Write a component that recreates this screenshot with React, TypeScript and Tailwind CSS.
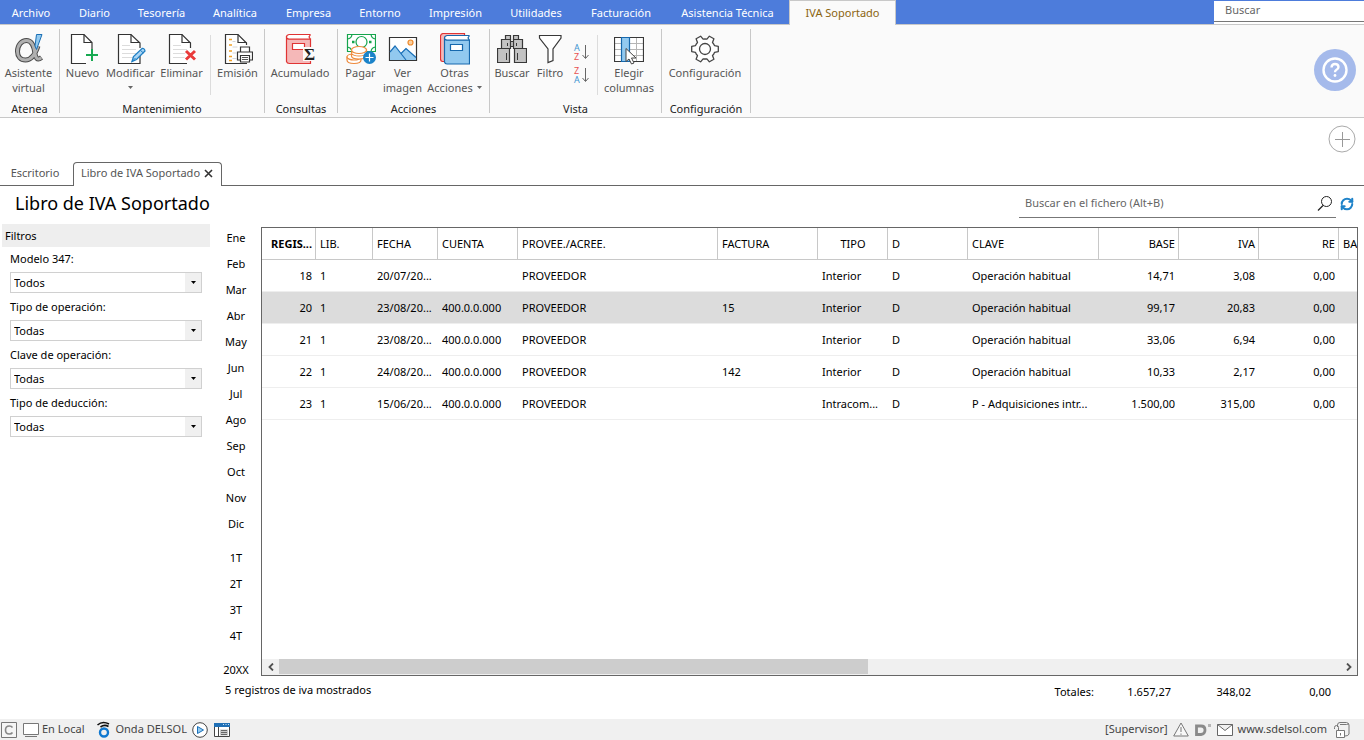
import { useState } from "react";
import type { ReactNode } from "react";
import { RefreshCw } from "lucide-react";

interface Column {
  label: string;
  width: string;
  align?: "right" | "center";
  bold?: boolean;
}

interface Filter {
  id: string;
  label: string;
  value: string;
}

const MENU = [
  { label: "Archivo", width: "w-16 pr-0.5" },
  { label: "Diario", width: "w-[61px]" },
  { label: "Tesorería", width: "w-[73px]" },
  { label: "Analítica", width: "w-[74px]" },
  { label: "Empresa", width: "w-[73px]" },
  { label: "Entorno", width: "w-[70px]" },
  { label: "Impresión", width: "w-[81px]" },
  { label: "Utilidades", width: "w-[80px]" },
  { label: "Facturación", width: "w-[90px]" },
  { label: "Asistencia Técnica", width: "w-[123px]" },
];

const MONTHS = ["Ene", "Feb", "Mar", "Abr", "May", "Jun", "Jul", "Ago", "Sep", "Oct", "Nov", "Dic"];
const QUARTERS = ["1T", "2T", "3T", "4T"];

const FILTERS: Filter[] = [
  { id: "modelo", label: "Modelo 347:", value: "Todos" },
  { id: "tipo", label: "Tipo de operación:", value: "Todas" },
  { id: "clave", label: "Clave de operación:", value: "Todas" },
  { id: "deduccion", label: "Tipo de deducción:", value: "Todas" },
];

const COLUMNS: Column[] = [
  { label: "REGIS...", width: "w-[54px]", align: "right", bold: true },
  { label: "LIB.", width: "w-[57px]" },
  { label: "FECHA", width: "w-[65px]" },
  { label: "CUENTA", width: "w-[80px]" },
  { label: "PROVEE./ACREE.", width: "w-[200px]" },
  { label: "FACTURA", width: "w-[100px]" },
  { label: "TIPO", width: "w-[70px]", align: "center" },
  { label: "D", width: "w-[80px]" },
  { label: "CLAVE", width: "w-[131px]" },
  { label: "BASE", width: "w-[80px]", align: "right" },
  { label: "IVA", width: "w-[80px]", align: "right" },
  { label: "RE", width: "w-[80px]", align: "right" },
  { label: "BA", width: "w-[80px]" },
];

const ROWS = [
  ["18", "1", "20/07/20...", "", "PROVEEDOR", "", "Interior", "D", "Operación habitual", "14,71", "3,08", "0,00", ""],
  ["20", "1", "23/08/20...", "400.0.0.000", "PROVEEDOR", "15", "Interior", "D", "Operación habitual", "99,17", "20,83", "0,00", ""],
  ["21", "1", "23/08/20...", "400.0.0.000", "PROVEEDOR", "", "Interior", "D", "Operación habitual", "33,06", "6,94", "0,00", ""],
  ["22", "1", "24/08/20...", "400.0.0.000", "PROVEEDOR", "142", "Interior", "D", "Operación habitual", "10,33", "2,17", "0,00", ""],
  ["23", "1", "15/06/20...", "400.0.0.000", "PROVEEDOR", "", "Intracom...", "D", "P - Adquisiciones intr...", "1.500,00", "315,00", "0,00", ""],
];

const RIGHT_COLUMNS = [0, 9, 10, 11];

/* ---------- Ribbon icons ---------- */

const Icon = ({ children }: { children: ReactNode }) => (
  <svg width="30" height="32" viewBox="0 0 30 32" fill="none" aria-hidden="true">
    {children}
  </svg>
);

const PageLines = () => (
  <path d="M6 12.5h8M6 16.5h14M6 20.5h14M6 24.5h12" stroke="#dcdcdc" />
);

const AlphaIcon = () => (
  <Icon>
    <path
      d="M24 13C22 19 18.500 27 11.500 27C6.500 27 3.500 23.500 3.500 18.500C3.500 12 7.500 7.500 12.500 7.500C18.500 7.500 20 14 20.800 19.500C21.500 24.500 23 28 27.500 24.500"
      stroke="#4a4a4a"
      strokeWidth="5"
    />
    <path
      d="M24 13C22 19 18.500 27 11.500 27C6.500 27 3.500 23.500 3.500 18.500C3.500 12 7.500 7.500 12.500 7.500C18.500 7.500 20 14 20.800 19.500C21.500 24.500 23 28 27.200 24.700"
      stroke="#b0b0b0"
      strokeWidth="3"
    />
    <path d="M22.500 1.500h5.500L22.500 16.500l-1.500-3.500z" fill="#92c9ef" stroke="#1a6fb5" />
  </Icon>
);

const NewIcon = () => (
  <Icon>
    <path d="M18 30.500H3.500v-29h12.500l8 8V18" fill="#fff" stroke="#333" strokeWidth="1.200" />
    <path d="M16 1.500v8h8" stroke="#333" strokeWidth="1.200" />
    <path d="M24 16v12M18 22h12" stroke="#17a951" strokeWidth="2" />
  </Icon>
);

const EditIcon = () => (
  <Icon>
    <path d="M24 22v8.500H2.500v-29h12.500l9 8.500v5" fill="#fff" stroke="#333" strokeWidth="1.200" />
    <path d="M15 1.500v8h8.500" stroke="#333" strokeWidth="1.200" />
    <PageLines />
    <path d="M16 28.500l1.500-5L26 15.500q2.500-.5 3 2.500L20.500 26.500z" fill="#a9d5f5" stroke="#1f7fc4" strokeWidth="1.300" />
    <path d="M16 28.500l3.500-3.500M24.500 17.500l3 2.500" stroke="#1f7fc4" />
  </Icon>
);

const DeleteIcon = () => (
  <Icon>
    <path d="M20 30.500H2.500v-29h12.500l8.500 8.500v5" fill="#fff" stroke="#333" strokeWidth="1.200" />
    <path d="M15 1.500v8h8.500" stroke="#333" strokeWidth="1.200" />
    <PageLines />
    <path d="M19 18l9 8.500M28 18l-9 8.500" stroke="#fff" strokeWidth="5" />
    <path d="M19 18l9 8.500M28 18l-9 8.500" stroke="#e93a3a" strokeWidth="3" />
  </Icon>
);

const PrintIcon = () => (
  <Icon>
    <path d="M24 30.500H2.500v-29h12.500l8.500 8.500v2" fill="#fff" stroke="#333" strokeWidth="1.200" />
    <path d="M15 1.500v8h8.500" stroke="#333" strokeWidth="1.200" />
    <path d="M6 6.500h3M6 12h3M6 18h3M6 23.500h3M6 27.500h3" stroke="#f0a127" strokeWidth="1.300" />
    <path d="M9.500 8.500h3M9.500 14h5M9.500 20h4M9.500 25.500h4" stroke="#d5d5d5" />
    <path d="M17.500 19v-5h9v5" fill="#fff" stroke="#333" strokeWidth="1.200" />
    <path d="M14.500 19h15v8h-15z" fill="#fff" stroke="#333" strokeWidth="1.200" />
    <path d="M17.500 22.500h9v6.500h-9z" fill="#fff" stroke="#333" strokeWidth="1.200" />
    <path d="M19 24.500h6M19 26.500h6" stroke="#555" />
  </Icon>
);

const LedgerIcon = () => (
  <Icon>
    <path d="M1.500 3v25.500q.5 2 3 2H25.500V6H4q-2.500-.5-2.500-3z" fill="#f5b8b8" stroke="#e03434" strokeWidth="1.200" />
    <path d="M25.500 1.500H4q-2.500.5-2.500 2.500T4 6h21.500M25.500 1.500L24 4l1.500 2" fill="#fff" stroke="#e03434" strokeWidth="1.200" />
    <path d="M7.500 10.500h12v6h-12z" fill="#fff" stroke="#e03434" strokeWidth="1.200" />
    <path d="M18 14h12v14h-12z" fill="#fafafa" />
    <text x="19" y="27" fontSize="17" fontFamily="Liberation Serif, serif" fontWeight="700" fill="#222">Σ</text>
  </Icon>
);

const PayIcon = () => (
  <Icon>
    <path d="M1.500 1.500h28v17h-28z" fill="#fff" stroke="#15a44c" strokeWidth="1.200" />
    <path d="M1.500 6q4-.5 4.500-4.500M25 1.500q.5 4 4.500 4.500M25 18.500q.5-4 4.500-4.500M1.500 14q3 .5 4 3" stroke="#15a44c" strokeWidth="1.200" />
    <circle cx="15.500" cy="9" r="5.500" stroke="#15a44c" strokeWidth="1.200" />
    <path d="M6 9h2.500M23 9h2.500" stroke="#15a44c" strokeWidth="2.500" />
    <g fill="#fff" stroke="#ee8a3c" strokeWidth="1.200">
      <path d="M1 24v3q0 3.500 7 3.500t7-3.500v-3z" />
      <ellipse cx="8" cy="24" rx="7" ry="3" />
      <path d="M5.500 19v4q0 3 7.500 3t7.500-3v-6z" />
      <path d="M5.500 20.500q2 2.500 7.500 2.500t7.500-2.500" />
      <ellipse cx="13" cy="17" rx="7.500" ry="3.500" />
    </g>
    <circle cx="23.500" cy="24.500" r="6.500" fill="#1b83c9" />
    <path d="M23.500 20.500v8M19.500 24.500h8" stroke="#fff" strokeWidth="1.200" />
  </Icon>
);

const ImageIcon = () => (
  <Icon>
    <path d="M1.500 4.500h27v23h-27z" fill="#fff" stroke="#333" strokeWidth="1.200" />
    <circle cx="22.500" cy="9.500" r="2.500" fill="#fbd0a0" stroke="#ee8a2c" strokeWidth="1.200" />
    <path d="M2 19l5-6 6 7 6 7H2z" fill="#92c9ef" />
    <path d="M13 20l5-5 10 9v3H18z" fill="#92c9ef" />
    <path d="M2 19l5-6 11 14M13 20.500l5-5 10 9" stroke="#1b70b8" strokeWidth="1.200" />
  </Icon>
);

const BooksIcon = () => (
  <Icon>
    <path d="M4 28.500H2.500q-2-.5-2-2.500V3q.5-2.500 3-2.500H24.500v2" fill="#f5b8b8" stroke="#e03434" strokeWidth="1.200" />
    <path d="M4.500 5v24q.5 2 2.500 2h22.500V7H7q-2.500-.5-2.500-2z" fill="#92c9ef" stroke="#1668ad" strokeWidth="1.200" />
    <path d="M29.500 2.500H7q-2.500.5-2.500 2.500T7 7h22.500M29.500 2.500L28 5l1.500 2" fill="#fff" stroke="#1668ad" strokeWidth="1.200" />
    <path d="M10.500 11.500h12v6h-12z" fill="#fff" stroke="#1668ad" strokeWidth="1.200" />
  </Icon>
);

const BinocularsIcon = () => (
  <Icon>
    <g fill="#c3c3c3" stroke="#383838" strokeWidth="1.200">
      <path d="M8.500 2.500h5v4h-5zM16.500 2.500h5v4h-5z" />
      <path d="M13 8.500h4v5h-4z" />
      <path d="M4.500 6.500h9v9h-9zM16.500 6.500h9v9h-9z" />
      <path d="M.5 15.500h12v14H.5zM17.500 15.500h12v14h-12z" />
    </g>
    <path d="M9.500 20v7M20.500 20v7M10.500 10v3M19.500 10v3" stroke="#383838" />
  </Icon>
);

const FunnelIcon = () => (
  <Icon>
    <path d="M4.500 2.500h21.500v2.500l-8 11v11.500l-5 2V16l-8.500-11z" fill="#fff" stroke="#383838" strokeWidth="1.200" />
  </Icon>
);

const ColumnsIcon = () => (
  <Icon>
    <path d="M.5 4.500h29v24H.5z" fill="#fff" />
    <path d="M1 10.500h28M1 16.500h28M1 22.500h28M22.500 5v23" stroke="#b5b5b5" />
    <path d="M.5 4.500h29v24H.5z" stroke="#383838" strokeWidth="1.200" />
    <path d="M7.500 4.500h8v24h-8z" fill="#92c9ef" stroke="#1668ad" strokeWidth="1.200" />
    <path d="M12 15.500v13l3-2.500 2.500 5 2.500-1-2.500-5h4.500z" fill="#fff" stroke="#444" />
  </Icon>
);

const GearIcon = () => (
  <Icon>
    <g transform="translate(15 16)" stroke="#444" strokeWidth="1.300" strokeLinejoin="round">
      <path
        d="M9.500-3.300L13.300-2.600V2.600L9.500 3.300Q9 5.200 7.500 6.600L8.900 10.200 4.400 12.800 1.900 9.800Q0 10.200-1.900 9.800L-4.400 12.800-8.900 10.200-7.500 6.600Q-9 5.200-9.500 3.300L-13.300 2.600V-2.600L-9.500-3.300Q-9-5.200-7.500-6.600L-8.900-10.200-4.400-12.800-1.900-9.800Q0-10.200 1.900-9.800L4.400-12.800 8.900-10.200 7.500-6.600Q9-5.200 9.500-3.300z"
        fill="#fff"
      />
      <circle r="5.500" />
    </g>
  </Icon>
);

const SortIcon = ({ up, down }: { up: string; down: string }) => (
  <svg width="18" height="18" viewBox="0 0 18 18" fill="none" overflow="visible" aria-hidden="true">
    <text x="2" y="8" fontSize="9" fontFamily="Noto Sans, sans-serif" fill={up === "A" ? "#3d94d1" : "#e85252"}>{up}</text>
    <text x="2" y="17" fontSize="9" fontFamily="Noto Sans, sans-serif" fill={down === "A" ? "#3d94d1" : "#e85252"}>{down}</text>
    <path d="M13.500 2v13M10.500 12l3 3.500 3-3.500" stroke="#666" />
  </svg>
);

/* ---------- Ribbon parts ---------- */

const Caret = () => (
  <svg width="5" height="3" viewBox="0 0 5 3" aria-hidden="true">
    <path d="M0 0h5L2.500 3z" fill="#666" />
  </svg>
);

const RibbonButton = ({
  icon,
  lines,
  width,
  arrow,
}: {
  icon: ReactNode;
  lines: string[];
  width: string;
  arrow?: boolean;
}) => (
  <button className={`flex flex-col items-center text-[#555] leading-[15px] ${width}`}>
    <span className="h-8">{icon}</span>
    {lines.map((line, i) => (
      <span key={line} className="flex items-center gap-1 whitespace-nowrap">
        {line}
        {arrow && i === 1 && <Caret />}
      </span>
    ))}
    {arrow && lines.length === 1 && (
      <span className="flex h-[15px] items-center">
        <Caret />
      </span>
    )}
  </button>
);

const RibbonGroup = ({ label, width, children }: { label: string; width: string; children: ReactNode }) => (
  <div className={`flex shrink-0 flex-col border-r border-[#c8c8c8] ${width}`}>
    <div className="flex flex-1 justify-center pt-1 pr-0.5">{children}</div>
    <p className="-mb-1 text-center leading-4 text-[#222]">{label}</p>
  </div>
);

const RibbonDivider = () => <div className="mx-[3px] mt-0.5 mb-1.5 w-px self-stretch bg-[#dcdcdc]" />;

const Ribbon = () => (
  <div className="flex h-[93px] items-stretch border-b border-[#c8c8c8] bg-[#fafafa] pt-1 pb-1">
    <RibbonGroup label="Atenea" width="w-[60px]">
      <RibbonButton icon={<AlphaIcon />} lines={["Asistente", "virtual"]} width="w-14" />
    </RibbonGroup>
    <RibbonGroup label="Mantenimiento" width="w-[205px]">
      <RibbonButton icon={<NewIcon />} lines={["Nuevo"]} width="w-11" />
      <RibbonButton icon={<EditIcon />} lines={["Modificar"]} width="w-[52px]" arrow />
      <RibbonButton icon={<DeleteIcon />} lines={["Eliminar"]} width="w-[50px]" />
      <RibbonDivider />
      <RibbonButton icon={<PrintIcon />} lines={["Emisión"]} width="w-[48px]" />
    </RibbonGroup>
    <RibbonGroup label="Consultas" width="w-[73px]">
      <RibbonButton icon={<LedgerIcon />} lines={["Acumulado"]} width="w-16" />
    </RibbonGroup>
    <RibbonGroup label="Acciones" width="w-[152px]">
      <RibbonButton icon={<PayIcon />} lines={["Pagar"]} width="w-[40px]" />
      <RibbonButton icon={<ImageIcon />} lines={["Ver", "imagen"]} width="w-11" />
      <RibbonButton icon={<BooksIcon />} lines={["Otras", "Acciones"]} width="w-[60px]" arrow />
    </RibbonGroup>
    <RibbonGroup label="Vista" width="w-[172px]">
      <RibbonButton icon={<BinocularsIcon />} lines={["Buscar"]} width="w-[40px]" />
      <RibbonButton icon={<FunnelIcon />} lines={["Filtro"]} width="w-[36px]" />
      <div className="flex w-[26px] flex-col items-center gap-[5px] pt-2.5">
        <button aria-label="Orden ascendente"><SortIcon up="A" down="Z" /></button>
        <button aria-label="Orden descendente"><SortIcon up="Z" down="A" /></button>
      </div>
      <RibbonDivider />
      <RibbonButton icon={<ColumnsIcon />} lines={["Elegir", "columnas"]} width="w-[56px]" />
    </RibbonGroup>
    <RibbonGroup label="Configuración" width="w-[89px]">
      <RibbonButton icon={<GearIcon />} lines={["Configuración"]} width="w-20" />
    </RibbonGroup>
    <div className="flex flex-1 items-center justify-end pr-2 pb-0.5">
      <button aria-label="Ayuda" className="flex size-[42px] items-center justify-center rounded-full bg-[#a5baeb]">
        <svg width="26" height="26" viewBox="0 0 26 26" fill="none" aria-hidden="true">
          <circle cx="13" cy="13" r="11.500" stroke="#fff" strokeWidth="2.400" />
          <path d="M9.500 10.500q.3-3.500 3.500-3.500 3.300 0 3.500 3 0 1.800-2 2.800-1.500.8-1.500 2.400" stroke="#fff" strokeWidth="2.400" />
          <circle cx="13" cy="18.500" r="1.400" fill="#fff" />
        </svg>
      </button>
    </div>
  </div>
);

/* ---------- Main area ---------- */

const FilterField = ({ filter }: { filter: Filter }) => (
  <div>
    <label htmlFor={filter.id} className="block leading-4">
      {filter.label}
    </label>
    <div className="relative mt-[5px]">
      <select
        id={filter.id}
        className="block h-[21px] w-full appearance-none border border-[#d0d0d0] bg-white pl-[3px] leading-[19px] outline-none"
      >
        <option>{filter.value}</option>
      </select>
      <span className="pointer-events-none absolute inset-y-px right-px flex w-4 items-center justify-center bg-[#f0f0f0]">
        <svg width="5" height="3" viewBox="0 0 5 3" aria-hidden="true">
          <path d="M0 0h5L2.500 3z" fill="#000" />
        </svg>
      </span>
    </div>
  </div>
);

const Periods = ({ onSelect }: { onSelect: (p: string) => void }) => (
  <div className="flex w-[50px] shrink-0 flex-col pt-px">
    {MONTHS.map((m) => (
      <button key={m} onClick={() => onSelect(m)} className="h-[26px]">{m}</button>
    ))}
    <div className="mt-2 flex flex-col">
      {QUARTERS.map((q) => (
        <button key={q} onClick={() => onSelect(q)} className="h-[26px]">{q}</button>
      ))}
    </div>
    <button onClick={() => onSelect("20XX")} className="mt-auto h-3 leading-3">20XX</button>
  </div>
);

const cellAlign = (i: number) => (RIGHT_COLUMNS.includes(i) ? "text-right" : "text-left");

const headAlign = (col: Column) =>
  col.align === "right" ? "text-right" : col.align === "center" ? "text-center" : "text-left";

const RecordsTable = () => {
  const [selected, setSelected] = useState("20");

  return (
    <div className="mt-[3px] flex min-w-0 flex-1 flex-col border border-[#666]">
      <div className="flex-1 overflow-hidden">
        <table className="w-[1157px] table-fixed border-separate border-spacing-0 whitespace-nowrap">
          <thead>
            <tr>
              {COLUMNS.map((col) => (
                <th
                  key={col.label}
                  className={`h-8 border-r border-b border-[#c8c8c8] pt-0.5 pr-[3px] pb-0 pl-1 ${headAlign(col)} ${col.width} ${
                    col.bold ? "font-bold" : "font-normal"
                  }`}
                >
                  {col.label}
                </th>
              ))}
            </tr>
          </thead>
          <tbody>
            {ROWS.map((row) => (
              <tr
                key={row[0]}
                onClick={() => setSelected(row[0])}
                className={row[0] === selected ? "bg-[#dcdcdc]" : ""}
              >
                {row.map((cell, i) => (
                  <td key={i} className={`h-8 border-b border-[#eee] px-1 pt-0.5 pb-0 ${cellAlign(i)}`}>
                    {cell}
                  </td>
                ))}
              </tr>
            ))}
          </tbody>
        </table>
      </div>
      <div className="flex h-4 items-stretch bg-[#f0f0f0]">
        <button aria-label="Desplazar a la izquierda" className="flex w-[17px] items-center justify-center">
          <svg width="6" height="8" viewBox="0 0 6 8" fill="none" aria-hidden="true">
            <path d="M5 .5L1.500 4 5 7.500" stroke="#505050" strokeWidth="1.800" />
          </svg>
        </button>
        <div className="flex-1">
          <div className="h-[15px] w-5/9 bg-[#cdcdcd]" />
        </div>
        <button aria-label="Desplazar a la derecha" className="flex w-[17px] items-center justify-center">
          <svg width="6" height="8" viewBox="0 0 6 8" fill="none" aria-hidden="true">
            <path d="M1 .5L4.500 4 1 7.500" stroke="#505050" strokeWidth="1.800" />
          </svg>
        </button>
      </div>
    </div>
  );
};

const StatusBar = () => (
  <footer className="flex h-[21px] items-center justify-between bg-[#f0f0f0] pr-[14px] pl-px text-[#444]">
    <div className="flex items-center">
      <svg width="16" height="16" viewBox="0 0 16 16" fill="none" aria-hidden="true">
        <path d="M.5.5h15v15H.5z" fill="#f5f5f5" stroke="#777" />
        <path d="M11.500 5.500Q10.500 4 8.300 4 4.500 4 4.500 8t3.800 4q2.200 0 3.200-1.500" stroke="#888" strokeWidth="1.600" />
      </svg>
      <svg className="ml-1.5" width="16" height="16" viewBox="0 0 16 16" fill="none" aria-hidden="true">
        <path d="M.5 1.500h15v11H.5z" fill="#fff" stroke="#777" />
        <path d="M2 14.500h12" stroke="#777" />
      </svg>
      <span className="ml-[3px]">En Local</span>
      <svg className="ml-3" width="16" height="17" viewBox="0 0 16 17" fill="none" aria-hidden="true">
        <circle cx="8" cy="11.500" r="4" stroke="#0f78d0" strokeWidth="2.400" />
        <path d="M1.500 4q5-4.500 11.500-1M4.500 6q4-3 8-.5" stroke="#111" strokeWidth="1.600" />
      </svg>
      <span className="ml-[3px]">Onda DELSOL</span>
      <svg className="ml-[5px]" width="16" height="16" viewBox="0 0 16 16" fill="none" aria-hidden="true">
        <circle cx="8" cy="8" r="7.300" fill="#fff" stroke="#444" />
        <path d="M5.500 4.500L11.500 8l-6 3.500z" fill="#92c9ef" stroke="#1b70b8" />
      </svg>
      <svg className="ml-1.5" width="16" height="14" viewBox="0 0 16 14" fill="none" aria-hidden="true">
        <path d="M.5.5h15v13H.5z" fill="#fff" stroke="#444" />
        <path d="M0 0h16v4H0z" fill="#1f6fb5" />
        <path d="M9 1.500h1M11.500 1.500h1M14 1.500h1" stroke="#cfe6f8" />
        <path d="M4.500 4v10" stroke="#444" />
        <path d="M6 6.500h8v6H6z" fill="#c9c9c9" />
        <path d="M7 7.500h6M7 9.500h6M7 11.500h6" stroke="#666" />
      </svg>
    </div>
    <div className="flex items-center">
      <span>[Supervisor]</span>
      <svg className="ml-[5px]" width="16" height="15" viewBox="0 0 16 15" fill="none" aria-hidden="true">
        <path d="M8 1L15.300 14H.7z" fill="#f8f8f8" stroke="#777" />
        <path d="M8 5v5M8 11.500v1.300" stroke="#777" />
      </svg>
      <svg className="ml-1.5" width="16" height="14" viewBox="0 0 16 14" fill="none" aria-hidden="true">
        <path d="M1.500 3H6Q10 3 10 7t-4 4.500H1.500z" stroke="#8a8a8a" strokeWidth="2.800" />
        <path d="M13 1h3v3h-3z" fill="#b5b5b5" />
      </svg>
      <svg className="ml-1.5" width="16" height="12" viewBox="0 0 16 12" fill="none" aria-hidden="true">
        <path d="M.5.5h15v11H.5zL8 6.500 15.500.5" fill="#fff" stroke="#666" />
      </svg>
      <a href="http://www.sdelsol.com" className="ml-[5px]">www.sdelsol.com</a>
      <svg className="ml-1.5" width="17" height="16" viewBox="0 0 17 16" fill="none" aria-hidden="true">
        <path d="M4.500 5V3Q4.500.5 7 .5H13.500Q16 1 16 3v9q-.5 2-4 2" stroke="#777" />
        <path d="M7 2.500h6.500Q16 2 16 1.500" stroke="#777" />
        <path d="M1.500 7V5.500q0-2 2-2t2 2V8" stroke="#777" />
        <path d="M3.500 8.500h8v7h-8z" fill="#fff" stroke="#777" />
        <path d="M7.500 11v2.500" stroke="#777" />
      </svg>
    </div>
  </footer>
);

const App = () => {
  const [, setPeriod] = useState("");

  return (
    <div className="flex min-h-screen flex-col bg-white font-['Noto_Sans','Open_Sans',sans-serif] text-[11px] text-black">
      {/* Menu bar */}
      <nav className="flex h-[25px] items-stretch bg-[#4d7cdb]">
        <div className="flex flex-1 items-stretch border-b border-[#c8c8c8] text-white">
          {MENU.map((item) => (
            <button key={item.label} className={`shrink-0 pt-0.5 whitespace-nowrap ${item.width}`}>
              {item.label}
            </button>
          ))}
          <button className="-mb-px w-[107px] shrink-0 border border-b-0 border-[#c8c8c8] bg-[#fafafa] text-[#8a6410]">
            IVA Soportado
          </button>
        </div>
        <div className="w-[150px] border-b border-[#c8c8c8] bg-white">
          <input
            aria-label="Buscar"
            placeholder="Buscar"
            className="block h-[22px] w-full border-t border-b border-t-[#4d7cdb] border-b-[#777] px-[11px] pb-1 outline-none placeholder:text-[#666]"
          />
        </div>
      </nav>

      <Ribbon />

      {/* Document tabs */}
      <div className="flex h-[68px] items-end justify-between border-b border-[#666]">
        <div className="-mb-px flex items-end text-[#555]">
          <button className="h-6 w-[73px] pr-[3px] pb-0.5">Escritorio</button>
          <div className="flex h-6 items-center gap-1 rounded-t-[4px] border border-b-0 border-[#666] bg-white pr-2 pb-0.5 pl-[7px]">
            <button>Libro de IVA Soportado</button>
            <button aria-label="Cerrar">
              <svg width="9" height="9" viewBox="0 0 9 9" aria-hidden="true">
                <path d="M1 1l7 7M8 1L1 8" stroke="#333" strokeWidth="1.600" />
              </svg>
            </button>
          </div>
        </div>
        <button aria-label="Añadir" className="mr-2 self-start pt-[7px]">
          <svg width="28" height="28" viewBox="0 0 28 28" fill="none" aria-hidden="true">
            <circle cx="14" cy="14" r="13" stroke="#aaa" />
            <path d="M14.500 7v15M7 14.500h15" stroke="#999" />
          </svg>
        </button>
      </div>

      {/* Title and search */}
      <header className="flex h-[38px] items-start justify-between pr-[10px] pl-[15px]">
        <h1 className="text-[18px] leading-[34px]">Libro de IVA Soportado</h1>
        <div className="flex items-center gap-1">
          <div className="mt-1 flex h-[28px] w-[317px] items-center border-b border-[#777]">
            <input
              aria-label="Buscar en el fichero"
              placeholder="Buscar en el fichero (Alt+B)"
              className="min-w-0 flex-1 px-1.5 outline-none placeholder:text-[#666]"
            />
            <svg className="mr-[3px]" width="16" height="17" viewBox="0 0 16 17" fill="none" aria-hidden="true">
              <circle cx="9.500" cy="6.500" r="5" stroke="#222" />
              <path d="M6 10.500L1 15.500" stroke="#222" strokeWidth="1.200" />
            </svg>
          </div>
          <button aria-label="Actualizar" className="pt-1">
            <RefreshCw size={14} strokeWidth={3.5} className="text-[#1f83c9]" />
          </button>
        </div>
      </header>

      <main className="flex flex-1 pr-1.5 pl-0.5">
        <aside className="w-[209px] shrink-0 pr-px">
          <h2 className="h-[23px] bg-[#eee] pl-[3px] leading-[23px]">Filtros</h2>
          <div className="flex flex-col gap-1.5 pt-1 pr-2 pl-2">
            {FILTERS.map((f) => (
              <FilterField key={f.id} filter={f} />
            ))}
          </div>
        </aside>
        <div className="flex min-w-0 flex-1">
          <Periods onSelect={setPeriod} />
          <RecordsTable />
        </div>
      </main>

      <div className="flex h-[43px] items-start justify-between pr-[33px] pl-[225px] pt-1.5">
        <p className="leading-4">5 registros de iva mostrados</p>
        <div className="flex pt-0.5 leading-4">
          <span>Totales:</span>
          <span className="w-[77px] text-right">1.657,27</span>
          <span className="w-20 text-right">348,02</span>
          <span className="w-20 text-right">0,00</span>
        </div>
      </div>

      <StatusBar />
    </div>
  );
};

export default App;
